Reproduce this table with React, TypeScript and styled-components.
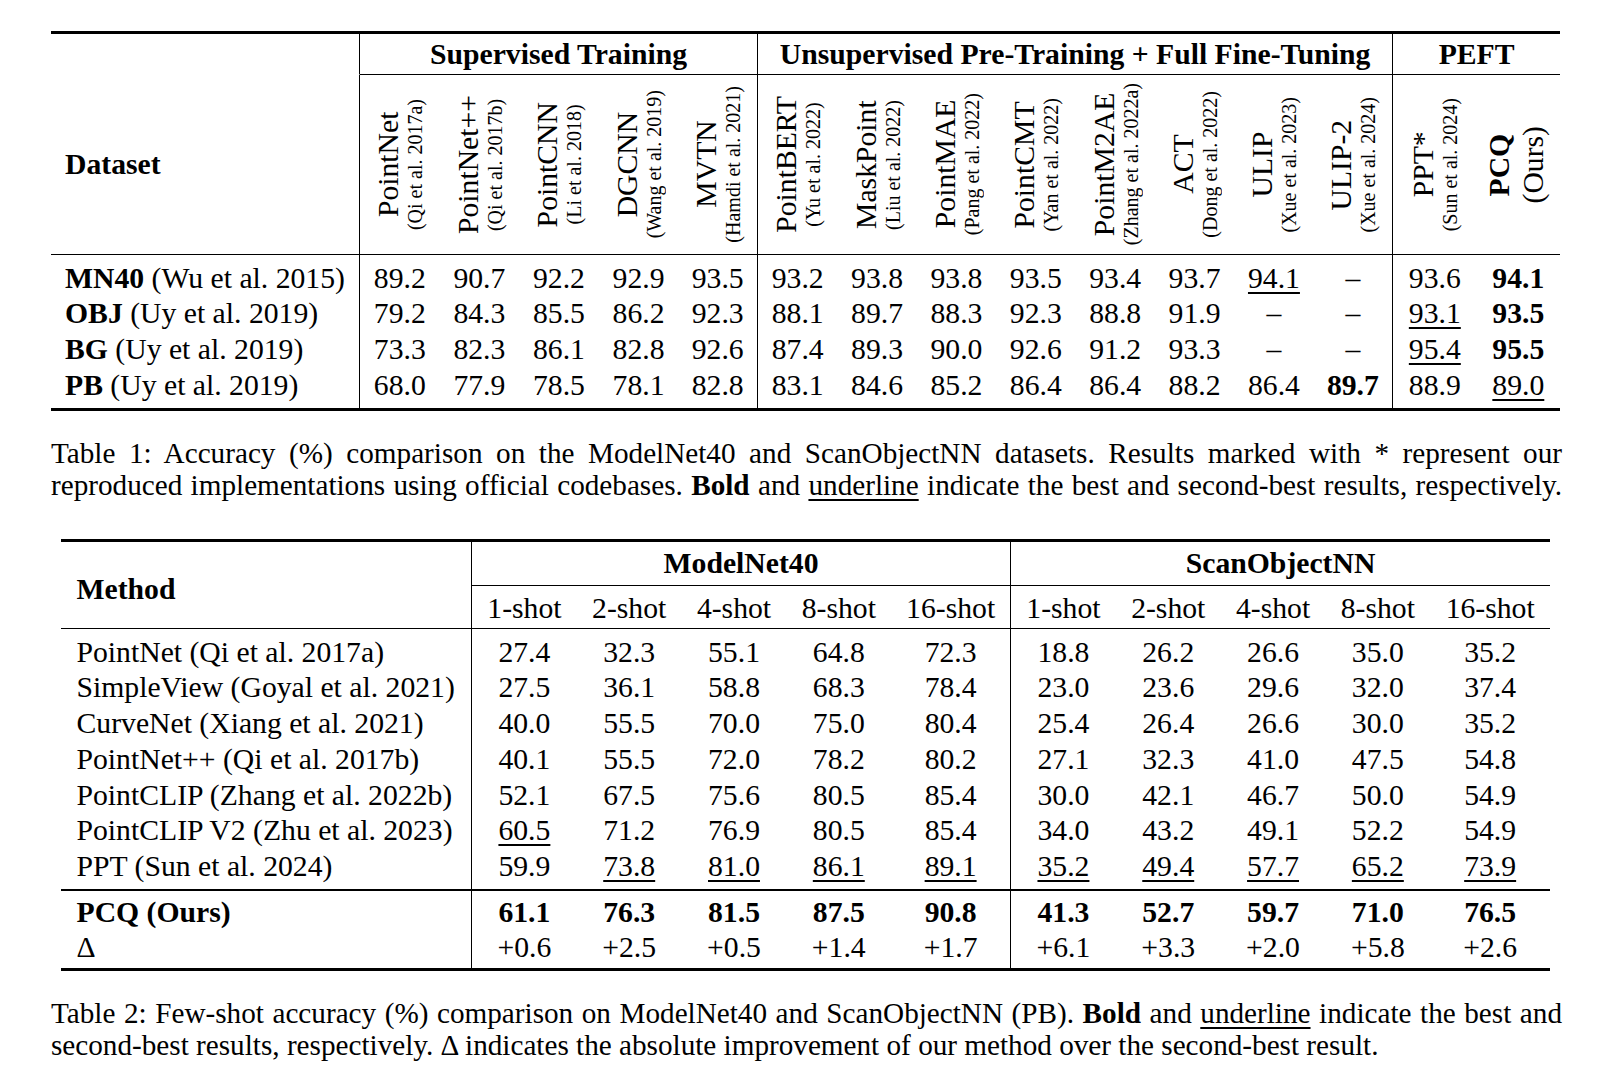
import React from 'react';
import styled, { createGlobalStyle } from 'styled-components';

const GlobalStyle = createGlobalStyle`
  html, body {
    margin: 0;
    padding: 0;
    background: #fff;
  }
  body {
    font-family: 'Liberation Serif', 'Times New Roman', serif;
    color: #000;
  }
`;

const Page = styled.div`
  width: 1622px;
  height: 1092px;
  padding-top: 31px;
  box-sizing: border-box;
  overflow: hidden;
`;

const Block = styled.div<{ $left: number; $top?: number }>`
  margin-left: ${(p) => p.$left}px;
  margin-top: ${(p) => p.$top ?? 0}px;
`;

const Table = styled.table<{ $width: number }>`
  width: ${(p) => p.$width}px;
  table-layout: fixed;
  border-collapse: separate;
  border-spacing: 0;
  border-top: 3px solid #000;
  border-bottom: 3px solid #000;
  font-size: 29.7px;
`;

const Col = styled.col<{ $w: number }>`
  width: ${(p) => p.$w}px;
`;

const GroupTh = styled.th<{ $divider?: boolean; $ruled?: boolean; $h: number; $padTop?: number }>`
  padding: ${(p) => p.$padTop ?? 0}px 0 0 0;
  line-height: ${(p) => p.$h}px;
  font-weight: 700;
  text-align: center;
  white-space: nowrap;
  border-bottom: 1px solid ${(p) => (p.$ruled ? '#000' : 'transparent')};
  border-right: ${(p) => (p.$divider ? '1px solid #000' : 'none')};
`;

const CornerTh = styled.th<{ $indent: number; $padTop?: number }>`
  padding: ${(p) => p.$padTop ?? 0}px 0 0 ${(p) => p.$indent}px;
  line-height: 35.7px;
  font-weight: 700;
  text-align: left;
  vertical-align: middle;
  white-space: nowrap;
  border-bottom: 1px solid #000;
  border-right: 1px solid #000;
`;

const RotTh = styled.th<{ $divider?: boolean }>`
  padding: 0;
  font-weight: 400;
  border-bottom: 1px solid #000;
  border-right: ${(p) => (p.$divider ? '1px solid #000' : 'none')};
`;

const RotCell = styled.div`
  height: 179px;
  display: flex;
  align-items: center;
  justify-content: center;
`;

const RotStack = styled.div`
  writing-mode: vertical-rl;
  transform: rotate(180deg);
  text-align: center;
  white-space: nowrap;
`;

const RotName = styled.span<{ $bold?: boolean }>`
  display: block;
  font-size: 29.7px;
  line-height: 31px;
  font-weight: ${(p) => (p.$bold ? 700 : 400)};
`;

const RotCite = styled.span<{ $big?: boolean }>`
  display: block;
  font-size: ${(p) => (p.$big ? 29.7 : 20)}px;
  line-height: ${(p) => (p.$big ? 37 : 22)}px;
`;

const Td = styled.td<{
  $left?: boolean;
  $indent?: number;
  $divider?: boolean;
  $padTop?: number;
  $padBottom?: number;
  $rule?: number;
  $bold?: boolean;
}>`
  padding: ${(p) => p.$padTop ?? 0}px 0 ${(p) => p.$padBottom ?? 0}px
    ${(p) => (p.$left ? p.$indent ?? 0 : 0)}px;
  line-height: 35.7px;
  text-align: ${(p) => (p.$left ? 'left' : 'center')};
  vertical-align: middle;
  white-space: nowrap;
  font-weight: ${(p) => (p.$bold ? 700 : 400)};
  border-right: ${(p) => (p.$divider ? '1px solid #000' : 'none')};
  border-bottom: ${(p) => (p.$rule ? `${p.$rule}px solid #000` : 'none')};
`;

const ShotLabel = styled.span`
  font-weight: 400;
  line-height: 40.5px;
`;

const Strong = styled.b`
  font-weight: 700;
`;

const Under = styled.span`
  text-decoration: underline;
  text-decoration-thickness: 1.5px;
  text-underline-offset: 4px;
`;

const Caption = styled.div<{ $top: number; $width: number }>`
  margin-top: ${(p) => p.$top}px;
  width: ${(p) => p.$width}px;
  font-size: 29.2px;
  line-height: 32px;
`;

const CaptionLine = styled.div<{ $justify?: boolean }>`
  text-align: ${(p) => (p.$justify ? 'justify' : 'left')};
  text-align-last: ${(p) => (p.$justify ? 'justify' : 'auto')};
`;

// 'b:' = best (bold), 'u:' = second best (underline)
const Value = ({ v }: { v: string }) => {
  if (v.startsWith('b:')) return <Strong>{v.slice(2)}</Strong>;
  if (v.startsWith('u:')) return <Under>{v.slice(2)}</Under>;
  return <>{v}</>;
};

const t1Methods = [
  { name: 'PointNet', cite: '(Qi et al. 2017a)' },
  { name: 'PointNet++', cite: '(Qi et al. 2017b)' },
  { name: 'PointCNN', cite: '(Li et al. 2018)' },
  { name: 'DGCNN', cite: '(Wang et al. 2019)' },
  { name: 'MVTN', cite: '(Hamdi et al. 2021)' },
  { name: 'PointBERT', cite: '(Yu et al. 2022)' },
  { name: 'MaskPoint', cite: '(Liu et al. 2022)' },
  { name: 'PointMAE', cite: '(Pang et al. 2022)' },
  { name: 'PointCMT', cite: '(Yan et al. 2022)' },
  { name: 'PointM2AE', cite: '(Zhang et al. 2022a)' },
  { name: 'ACT', cite: '(Dong et al. 2022)' },
  { name: 'ULIP', cite: '(Xue et al. 2023)' },
  { name: 'ULIP-2', cite: '(Xue et al. 2024)' },
  { name: 'PPT*', cite: '(Sun et al. 2024)' },
  { name: 'PCQ', cite: '(Ours)', ours: true },
];

// column index after which a vertical rule is drawn
const t1Dividers = [4, 12];
const t1Widths = [309, ...Array(5).fill(79.6), ...Array(8).fill(79.375), 83.5, 83.5];

const t1Rows = [
  {
    key: 'MN40',
    ref: '(Wu et al. 2015)',
    vals: ['89.2', '90.7', '92.2', '92.9', '93.5', '93.2', '93.8', '93.8', '93.5', '93.4', '93.7', 'u:94.1', '–', '93.6', 'b:94.1'],
  },
  {
    key: 'OBJ',
    ref: '(Uy et al. 2019)',
    vals: ['79.2', '84.3', '85.5', '86.2', '92.3', '88.1', '89.7', '88.3', '92.3', '88.8', '91.9', '–', '–', 'u:93.1', 'b:93.5'],
  },
  {
    key: 'BG',
    ref: '(Uy et al. 2019)',
    vals: ['73.3', '82.3', '86.1', '82.8', '92.6', '87.4', '89.3', '90.0', '92.6', '91.2', '93.3', '–', '–', 'u:95.4', 'b:95.5'],
  },
  {
    key: 'PB',
    ref: '(Uy et al. 2019)',
    vals: ['68.0', '77.9', '78.5', '78.1', '82.8', '83.1', '84.6', '85.2', '86.4', '86.4', '88.2', '86.4', 'b:89.7', '88.9', 'u:89.0'],
  },
];

const shots = ['1-shot', '2-shot', '4-shot', '8-shot', '16-shot'];
const shotWidths = [104.8, 104.8, 104.8, 104.8, 119.8];
const t2Widths = [411, ...shotWidths, ...shotWidths];

const t2Rows = [
  { method: 'PointNet (Qi et al. 2017a)', vals: ['27.4', '32.3', '55.1', '64.8', '72.3', '18.8', '26.2', '26.6', '35.0', '35.2'] },
  { method: 'SimpleView (Goyal et al. 2021)', vals: ['27.5', '36.1', '58.8', '68.3', '78.4', '23.0', '23.6', '29.6', '32.0', '37.4'] },
  { method: 'CurveNet (Xiang et al. 2021)', vals: ['40.0', '55.5', '70.0', '75.0', '80.4', '25.4', '26.4', '26.6', '30.0', '35.2'] },
  { method: 'PointNet++ (Qi et al. 2017b)', vals: ['40.1', '55.5', '72.0', '78.2', '80.2', '27.1', '32.3', '41.0', '47.5', '54.8'] },
  { method: 'PointCLIP (Zhang et al. 2022b)', vals: ['52.1', '67.5', '75.6', '80.5', '85.4', '30.0', '42.1', '46.7', '50.0', '54.9'] },
  { method: 'PointCLIP V2 (Zhu et al. 2023)', vals: ['u:60.5', '71.2', '76.9', '80.5', '85.4', '34.0', '43.2', '49.1', '52.2', '54.9'] },
  { method: 'PPT (Sun et al. 2024)', vals: ['59.9', 'u:73.8', 'u:81.0', 'u:86.1', 'u:89.1', 'u:35.2', 'u:49.4', 'u:57.7', 'u:65.2', 'u:73.9'] },
];

const oursRow = ['61.1', '76.3', '81.5', '87.5', '90.8', '41.3', '52.7', '59.7', '71.0', '76.5'];
const deltaRow = ['+0.6', '+2.5', '+0.5', '+1.4', '+1.7', '+6.1', '+3.3', '+2.0', '+5.8', '+2.6'];

const AccuracyTable = () => (
  <Table $width={1509}>
    <colgroup>
      {t1Widths.map((w, i) => (
        <Col key={i} $w={w} />
      ))}
    </colgroup>
    <thead>
      <tr>
        <GroupTh $h={40} $divider />
        <GroupTh $h={40} $ruled $divider colSpan={5}>
          Supervised Training
        </GroupTh>
        <GroupTh $h={40} $ruled $divider colSpan={8}>
          Unsupervised Pre-Training + Full Fine-Tuning
        </GroupTh>
        <GroupTh $h={40} $ruled colSpan={2}>
          PEFT
        </GroupTh>
      </tr>
      <tr>
        <CornerTh $indent={14}>Dataset</CornerTh>
        {t1Methods.map((m, i) => (
          <RotTh key={m.name} $divider={t1Dividers.includes(i)}>
            <RotCell>
              <RotStack>
                <RotName $bold={m.ours}>{m.name}</RotName>
                <RotCite $big={m.ours}>{m.cite}</RotCite>
              </RotStack>
            </RotCell>
          </RotTh>
        ))}
      </tr>
    </thead>
    <tbody>
      {t1Rows.map((r, ri) => {
        const padTop = ri === 0 ? 5.5 : 0;
        const padBottom = ri === t1Rows.length - 1 ? 4.5 : 0;
        return (
          <tr key={r.key}>
            <Td $left $indent={14} $divider $padTop={padTop} $padBottom={padBottom}>
              <Strong>{r.key}</Strong> {r.ref}
            </Td>
            {r.vals.map((v, i) => (
              <Td key={i} $divider={t1Dividers.includes(i)} $padTop={padTop} $padBottom={padBottom}>
                <Value v={v} />
              </Td>
            ))}
          </tr>
        );
      })}
    </tbody>
  </Table>
);

const FewShotTable = () => (
  <Table $width={1489}>
    <colgroup>
      {t2Widths.map((w, i) => (
        <Col key={i} $w={w} />
      ))}
    </colgroup>
    <thead>
      <tr>
        <CornerTh $indent={15.5} $padTop={9} rowSpan={2}>
          Method
        </CornerTh>
        <GroupTh $h={42.5} $ruled $divider colSpan={5}>
          ModelNet40
        </GroupTh>
        <GroupTh $h={42.5} $ruled colSpan={5}>
          ScanObjectNN
        </GroupTh>
      </tr>
      <tr>
        {[...shots, ...shots].map((s, i) => (
          <Td as="th" key={i} $divider={i === 4} $rule={1} $padTop={2}>
            <ShotLabel>{s}</ShotLabel>
          </Td>
        ))}
      </tr>
    </thead>
    <tbody>
      {t2Rows.map((r, ri) => {
        const padTop = ri === 0 ? 5.4 : 0;
        const last = ri === t2Rows.length - 1;
        const padBottom = last ? 3.9 : 0;
        const rule = last ? 2 : 0;
        return (
          <tr key={r.method}>
            <Td $left $indent={15.5} $divider $padTop={padTop} $padBottom={padBottom} $rule={rule}>
              {r.method}
            </Td>
            {r.vals.map((v, i) => (
              <Td key={i} $divider={i === 4} $padTop={padTop} $padBottom={padBottom} $rule={rule}>
                <Value v={v} />
              </Td>
            ))}
          </tr>
        );
      })}
      <tr>
        <Td $left $indent={15.5} $divider $bold $padTop={4}>
          PCQ (Ours)
        </Td>
        {oursRow.map((v, i) => (
          <Td key={i} $divider={i === 4} $bold $padTop={4}>
            {v}
          </Td>
        ))}
      </tr>
      <tr>
        <Td $left $indent={15.5} $divider $padBottom={2}>
          Δ
        </Td>
        {deltaRow.map((v, i) => (
          <Td key={i} $divider={i === 4} $padBottom={2}>
            {v}
          </Td>
        ))}
      </tr>
    </tbody>
  </Table>
);

export default function App() {
  return (
    <>
      <GlobalStyle />
      <Page>
        <Block $left={51}>
          <AccuracyTable />
          <Caption $top={26} $width={1511}>
            <CaptionLine $justify>
              Table 1: Accuracy (%) comparison on the ModelNet40 and ScanObjectNN datasets. Results marked
              with * represent our
            </CaptionLine>
            <CaptionLine $justify>
              reproduced implementations using official codebases. <Strong>Bold</Strong> and{' '}
              <Under>underline</Under> indicate the best and second-best results, respectively.
            </CaptionLine>
          </Caption>
        </Block>
        <Block $left={61} $top={38.5}>
          <FewShotTable />
        </Block>
        <Block $left={51}>
          <Caption $top={25.6} $width={1511}>
            <CaptionLine $justify>
              Table 2: Few-shot accuracy (%) comparison on ModelNet40 and ScanObjectNN (PB).{' '}
              <Strong>Bold</Strong> and <Under>underline</Under> indicate the best and
            </CaptionLine>
            <CaptionLine>
              second-best results, respectively. Δ indicates the absolute improvement of our method over
              the second-best result.
            </CaptionLine>
          </Caption>
        </Block>
      </Page>
    </>
  );
}
